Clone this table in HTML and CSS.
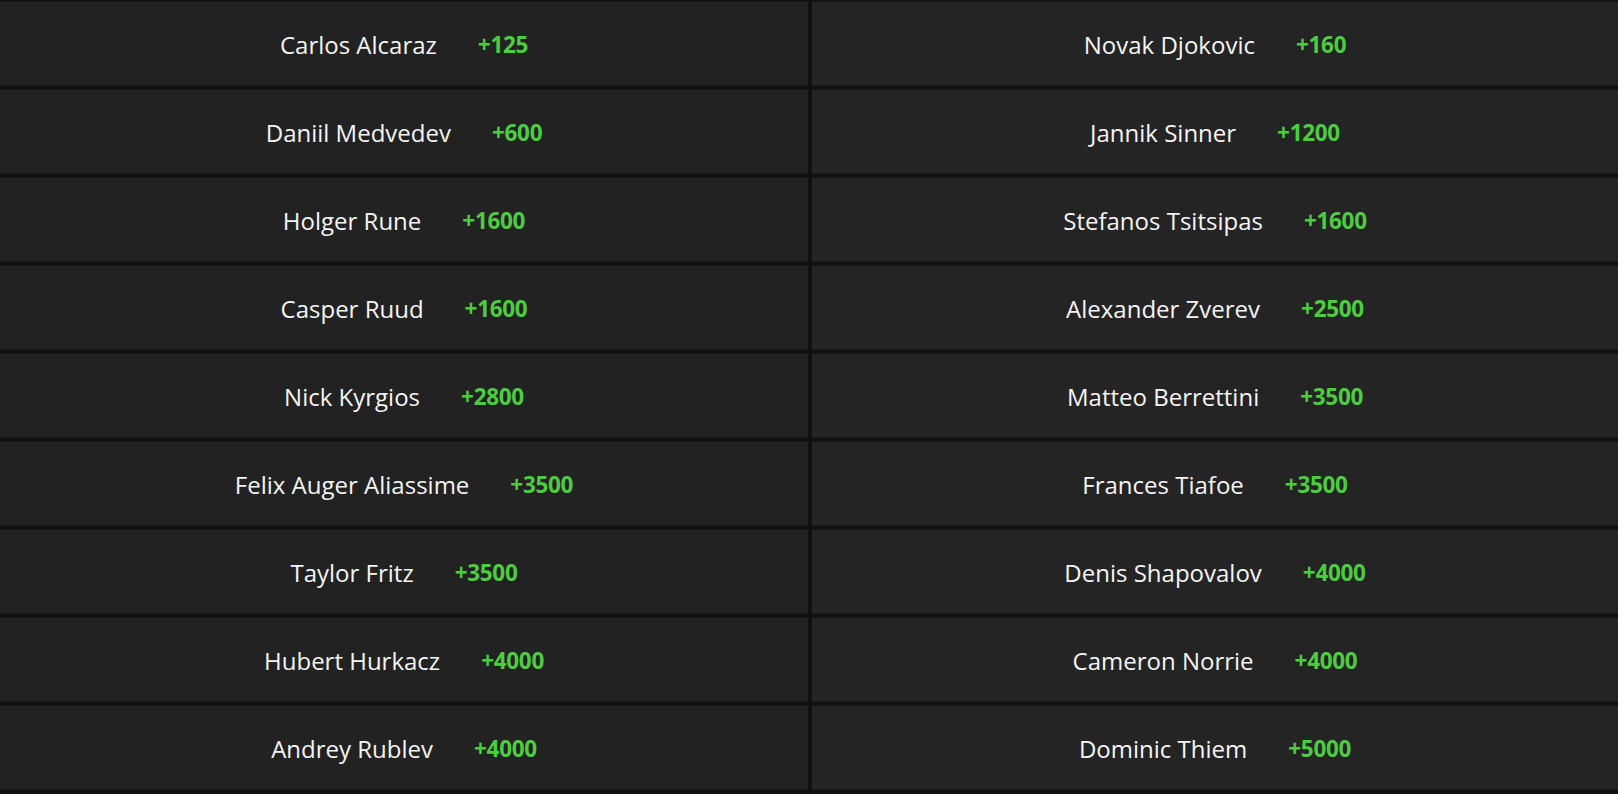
FILE: index.html
```html
<!DOCTYPE html>
<html>
<head>
<meta charset="utf-8">
<link rel="stylesheet" href="styles.css">
</head>
<body>
<div class="board">
  <div class="cell"><span class="name">Carlos Alcaraz</span><span class="odds">+125</span></div>
  <div class="cell alt"><span class="name">Novak Djokovic</span><span class="odds">+160</span></div>
  <div class="cell"><span class="name">Daniil Medvedev</span><span class="odds">+600</span></div>
  <div class="cell alt"><span class="name">Jannik Sinner</span><span class="odds">+1200</span></div>
  <div class="cell"><span class="name">Holger Rune</span><span class="odds">+1600</span></div>
  <div class="cell alt"><span class="name">Stefanos Tsitsipas</span><span class="odds">+1600</span></div>
  <div class="cell"><span class="name">Casper Ruud</span><span class="odds">+1600</span></div>
  <div class="cell alt"><span class="name">Alexander Zverev</span><span class="odds">+2500</span></div>
  <div class="cell"><span class="name">Nick Kyrgios</span><span class="odds">+2800</span></div>
  <div class="cell alt"><span class="name">Matteo Berrettini</span><span class="odds">+3500</span></div>
  <div class="cell"><span class="name">Felix Auger Aliassime</span><span class="odds">+3500</span></div>
  <div class="cell alt"><span class="name">Frances Tiafoe</span><span class="odds">+3500</span></div>
  <div class="cell"><span class="name">Taylor Fritz</span><span class="odds">+3500</span></div>
  <div class="cell alt"><span class="name">Denis Shapovalov</span><span class="odds">+4000</span></div>
  <div class="cell"><span class="name">Hubert Hurkacz</span><span class="odds">+4000</span></div>
  <div class="cell alt"><span class="name">Cameron Norrie</span><span class="odds">+4000</span></div>
  <div class="cell"><span class="name">Andrey Rublev</span><span class="odds">+4000</span></div>
  <div class="cell alt"><span class="name">Dominic Thiem</span><span class="odds">+5000</span></div>
</div>
</body>
</html>
```
FILE: styles.css
```css
html, body {
  margin: 0;
  padding: 0;
  background: #111111;
  height: 100%;
  overflow: hidden;
}
.board {
  display: grid;
  grid-template-columns: 808px 1fr;
  grid-auto-rows: 85px;
  column-gap: 4px;
  row-gap: 3px;
  padding-top: 1px;
  font-family: "Open Sans", "Noto Sans", sans-serif;
}
.cell {
  background: #222222;
  display: flex;
  align-items: center;
  justify-content: center;
  gap: 41px;
  padding-top: 2px;
  box-sizing: border-box;
  box-shadow: inset 0 1px 0 #1c1c1c, inset 0 -1px 0 #1c1c1c;
}
.cell.alt {
  background: #242424;
}
.name {
  color: #f4f4f4;
  font-size: 24px;
  font-weight: 400;
}
.odds {
  color: #4ccd3f;
  font-size: 22.5px;
  font-weight: 700;
  letter-spacing: -0.3px;
}
```
